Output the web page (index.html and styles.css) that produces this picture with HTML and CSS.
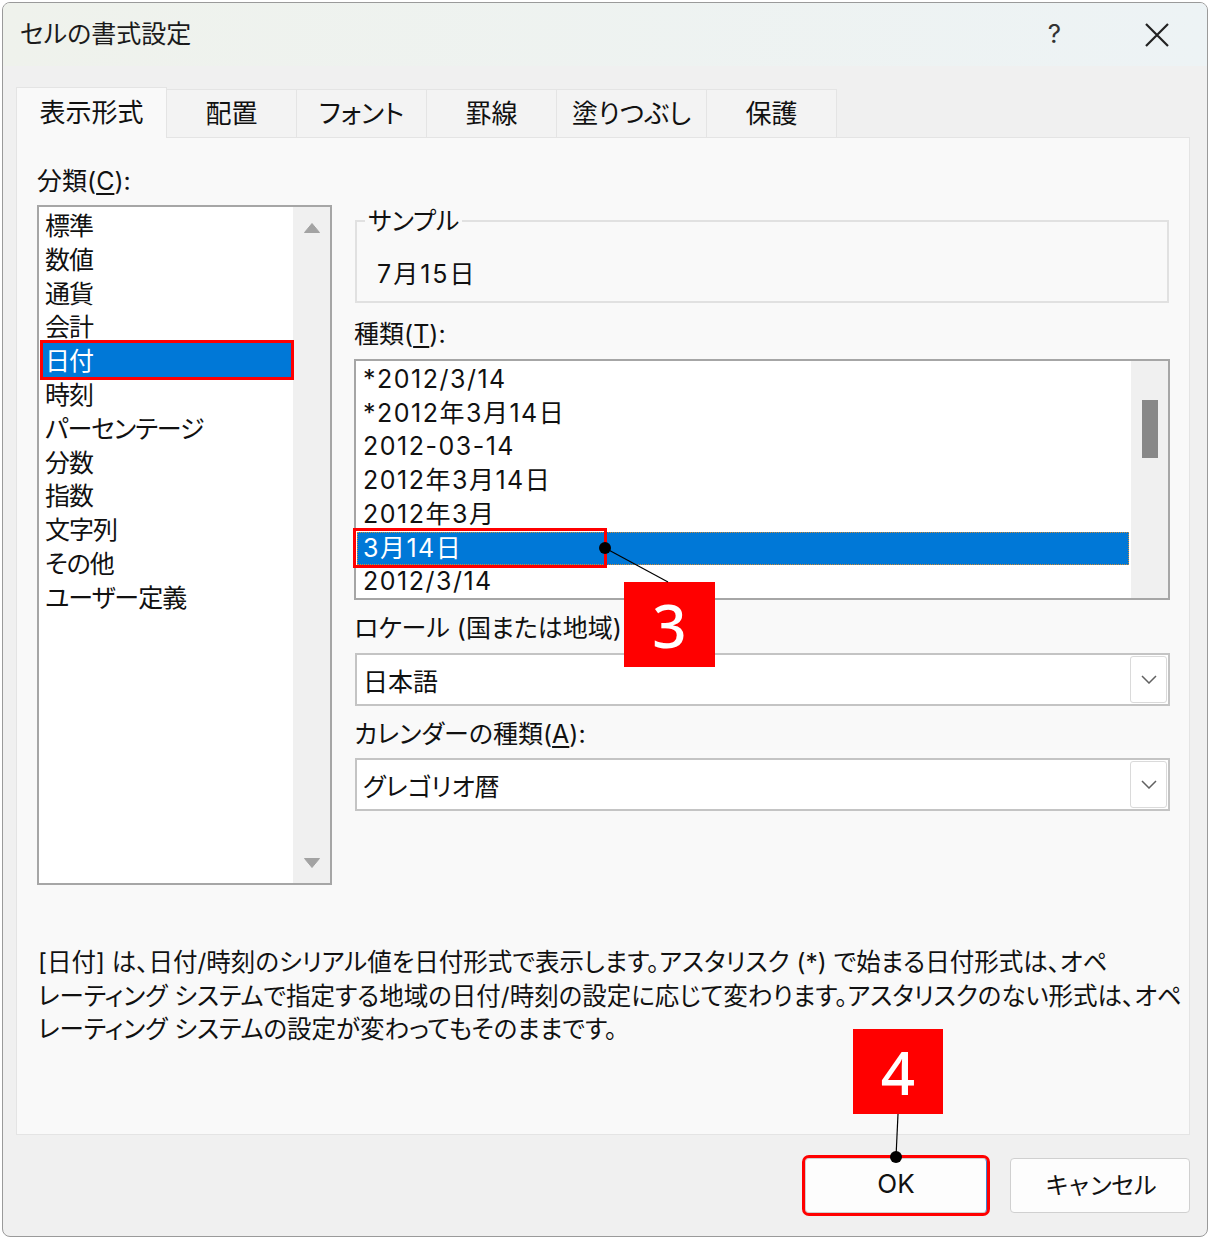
FILE: index.html
```html
<!DOCTYPE html>
<html lang="ja">
<head>
    <meta charset="UTF-8">
    <title>セルの書式設定</title>
    <link rel="stylesheet" href="styles.css">
</head>
<body>
<div class="screen">
    <div class="window">
        <div class="titlebar">
            <span class="title">セルの書式設定</span>
            <span class="help">?</span>
            <svg class="close" width="24" height="24" viewBox="0 0 24 24"><path d="M1 1 L23 23 M23 1 L1 23" stroke="#222" stroke-width="2.2" fill="none"/></svg>
        </div>

        <div class="body">
            <div class="tabs">
                <div class="tab active">表示形式</div>
                <div class="tab">配置</div>
                <div class="tab">フォント</div>
                <div class="tab">罫線</div>
                <div class="tab">塗りつぶし</div>
                <div class="tab">保護</div>
            </div>

            <div class="panel">
                <div class="columns">
                    <div class="left">
                        <div class="label">分類(<u>C</u>):</div>
                        <div class="listbox cat">
                            <ul class="items">
                                <li>標準</li>
                                <li>数値</li>
                                <li>通貨</li>
                                <li>会計</li>
                                <li class="sel marked">日付</li>
                                <li>時刻</li>
                                <li>パーセンテージ</li>
                                <li>分数</li>
                                <li>指数</li>
                                <li>文字列</li>
                                <li>その他</li>
                                <li>ユーザー定義</li>
                            </ul>
                            <div class="vscroll">
                                <svg width="16" height="10" viewBox="0 0 16 10"><path d="M8 0.5 L15.5 9.5 L0.5 9.5 Z" fill="#a3a3a3" stroke="#a3a3a3" stroke-linejoin="round"/></svg>
                                <svg width="16" height="10" viewBox="0 0 16 10"><path d="M0.5 0.5 L15.5 0.5 L8 9.5 Z" fill="#a3a3a3" stroke="#a3a3a3" stroke-linejoin="round"/></svg>
                            </div>
                        </div>
                    </div>

                    <div class="right">
                        <fieldset class="sample">
                            <legend>サンプル</legend>
                            <div class="sample-value">7月15日</div>
                        </fieldset>

                        <div class="label gap-s">種類(<u>T</u>):</div>
                        <div class="listbox types">
                            <ul class="items">
                                <li>*2012/3/14</li>
                                <li>*2012年3月14日</li>
                                <li>2012-03-14</li>
                                <li>2012年3月14日</li>
                                <li>2012年3月</li>
                                <li class="sel focus">3月14日</li>
                                <li>2012/3/14</li>
                            </ul>
                            <div class="vscroll thumbed"><div class="thumb"></div></div>
                        </div>

                        <div class="label gap-m">ロケール (国または地域)(<u>L</u>):</div>
                        <div class="combo">
                            <span>日本語</span>
                            <span class="drop"><svg width="16" height="9" viewBox="0 0 16 9"><path d="M1 1 L8 8 L15 1" stroke="#616161" stroke-width="1.5" fill="none"/></svg></span>
                        </div>

                        <div class="label gap-m">カレンダーの種類(<u>A</u>):</div>
                        <div class="combo cal">
                            <span>グレゴリオ暦</span>
                            <span class="drop"><svg width="16" height="9" viewBox="0 0 16 9"><path d="M1 1 L8 8 L15 1" stroke="#616161" stroke-width="1.5" fill="none"/></svg></span>
                        </div>
                    </div>
                </div>

                <p class="desc">[日付] は、日付/時刻のシリアル値を日付形式で表示します。アスタリスク (*) で始まる日付形式は、オペ<br>レーティング システムで指定する地域の日付/時刻の設定に応じて変わります。アスタリスクのない形式は、オペ<br>レーティング システムの設定が変わってもそのままです。</p>
            </div>

            <div class="buttons">
                <button class="btn ok">OK</button>
                <button class="btn cancel">キャンセル</button>
            </div>
        </div>
    </div>

    <!-- annotations -->
    <div class="mark m3"></div>
    <div class="callout c3">3</div>
    <div class="callout c4">4</div>
    <svg class="leaders" width="1211" height="1240">
        <line x1="605" y1="548" x2="668" y2="582" stroke="#000" stroke-width="1.2"/>
        <circle cx="605" cy="548" r="6" fill="#000"/>
        <line x1="898" y1="1114" x2="896" y2="1157" stroke="#000" stroke-width="1.2"/>
        <circle cx="896" cy="1157" r="6" fill="#000"/>
    </svg>
</div>
</body>
</html>
```

FILE: styles.css
```css
* { box-sizing: border-box; }
body { margin: 0; background: #fff; font-family: Inter, "Noto Sans CJK JP", sans-serif; font-feature-settings: "palt"; color: #111; }
.screen { position: relative; width: 1211px; height: 1240px; padding: 2px 0 0 2px; overflow: hidden; }

.window {
    width: 1206px; height: 1235px; border: 1px solid #9a9a9a; border-radius: 8px;
    background: #f0f0f0; overflow: hidden; display: flex; flex-direction: column;
}
.titlebar {
    height: 63px; flex: none; display: flex; align-items: center; padding: 0 38px 6px 17px;
    background: linear-gradient(90deg, #eff2ec, #edf3f5);
}
.title { flex: 1; font-size: 25px; color: #1b1b1b; }
.help { font-size: 26px; color: #333; margin: 4px 84px 0 0; }
.close { display: block; margin-top: 6px; }

.body { flex: 1; display: flex; flex-direction: column; padding: 21px 17px 0 13px; }
.tabs { display: flex; align-items: flex-end; height: 50px; }
.tab {
    height: 48px; min-width: 131px; padding: 0 15px 5px; display: flex; align-items: center; justify-content: center;
    font-size: 26px; background: #f3f3f3; border: 1px solid #e4e4e4; border-bottom: none; margin-right: -1px;
}
.tab.active { height: 51px; min-width: 151px; margin-bottom: -1px; background: #f9f9f9; position: relative; z-index: 1; }

.panel { height: 998px; flex: none; background: #f9f9f9; border: 1px solid #e4e4e4; padding: 26px 19px 0 20px; }
.columns { display: grid; grid-template-columns: 295px 1fr; column-gap: 22px; }
.label { font-size: 25px; line-height: 34px; }
.label u { text-underline-offset: 3px; }
.gap-s { margin-top: 14px; }
.gap-m { margin-top: 11px; }

.listbox { display: flex; background: #fff; border: 2px solid #a6a6a6; }
.listbox.cat { height: 680px; margin-top: 7px; }
.listbox.types { height: 241px; margin-top: 8px; }
.items { flex: 1; list-style: none; margin: 0; padding: 1px 2px 1px 4px; font-size: 25px; }
.cat .items li { line-height: 33.8px; padding: 2px 0 0 2px; height: 33.8px; letter-spacing: -1px; }
.types .items { padding: 2px 2px 0 1px; }
.types .items li { line-height: 33.7px; padding-left: 6px; letter-spacing: 1.5px; }
.items li.sel { background: #0078d7; color: #fff; }
.items li.marked { outline: 3px solid #ff0000; position: relative; }
.items li.focus { outline: 1px dotted #c98b3a; outline-offset: -1px; }
.vscroll {
    width: 37px; flex: none; background: #f0f0f0; display: flex; flex-direction: column;
    justify-content: space-between; align-items: center; padding: 16px 0 15px;
}
.vscroll svg { display: block; }
.vscroll.thumbed { justify-content: flex-start; padding: 39px 0 0; }
.thumb { width: 16px; height: 58px; background: #888; }

.sample { margin: 41px 1px 0; border: 2px solid #e1e1e1; padding: 0 20px 10px; min-width: 0; }
.sample legend { font-size: 25px; line-height: 32px; padding: 0 3px; margin-left: -12px; }
.sample-value { font-size: 25px; line-height: 34px; margin-top: 20px; letter-spacing: 2px; }

.combo {
    height: 53px; margin: 8px 0 0 1px; display: flex; align-items: center; padding-left: 6px;
    background: #fff; border: 2px solid #c4c4c4; font-size: 25px;
}
.combo.cal { margin-top: 7px; }
.drop {
    margin-left: auto; margin-right: 1px; width: 37px; height: 47px; display: flex; align-items: center;
    justify-content: center; border: 1px solid #dadada; border-radius: 3px; background: #fff;
}

.desc { margin: 61px 0 0 1px; font-size: 24.5px; line-height: 33.5px; white-space: nowrap; }

.buttons { display: flex; justify-content: flex-end; gap: 23px; margin-top: 23px; }
.btn {
    width: 180px; height: 55px; border: 1px solid #d0d0d0; border-radius: 4px; background: #fdfdfd;
    font-family: inherit; font-size: 26px; color: #111; padding: 0 0 4px;
}
.btn.cancel { font-size: 24px; letter-spacing: -2px; }
.btn.ok { width: 182px; outline: 3px solid #ff0000; border-color: #d0d0d0 #3b7fd1 #d0d0d0 #d0d0d0; }

.mark { position: absolute; border: 3px solid #ff0000; }
.m3 { left: 353px; top: 528px; width: 254px; height: 40px; }
.callout {
    position: absolute; background: #ff0000; color: #fff; display: flex; align-items: center; justify-content: center;
    font-family: "Noto Sans", sans-serif; font-weight: 500; font-size: 60px;
}
.c3 { left: 624px; top: 582px; width: 91px; height: 85px; }
.c4 { left: 853px; top: 1029px; width: 90px; height: 85px; }
.leaders { position: absolute; left: 0; top: 0; pointer-events: none; }
```
